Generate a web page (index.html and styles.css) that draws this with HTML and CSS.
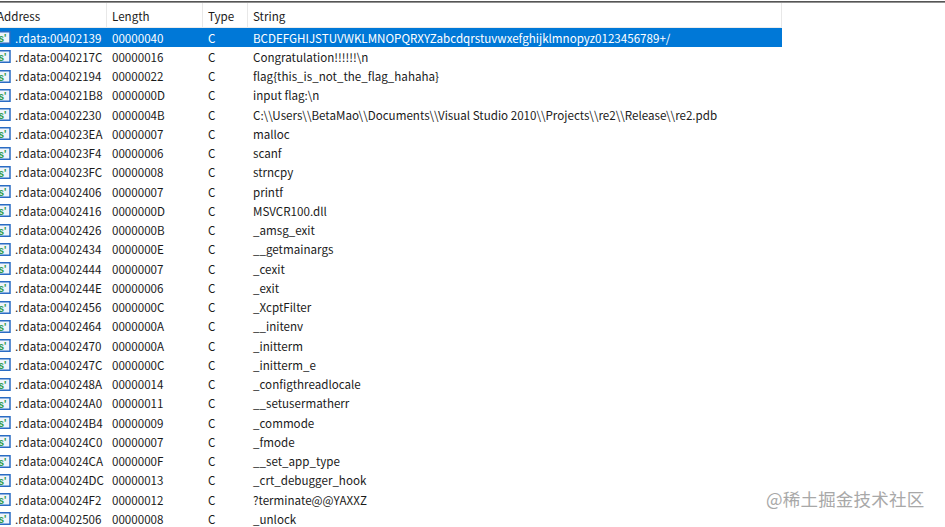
FILE: index.html
```html
<!DOCTYPE html>
<html>
<head>
<meta charset="utf-8">
<link rel="stylesheet" href="styles.css">
</head>
<body>
<div class="topline"></div>
<div class="table">
  <div class="row head">
    <div class="c addr">Address</div>
    <div class="c len">Length</div>
    <div class="c type">Type</div>
    <div class="c str">String</div>
  </div>
  <div id="rows"></div>
</div>
<div class="watermark">@稀土掘金技术社区</div>
<script src="app.js"></script>
</body>
</html>
```
FILE: styles.css
```css
html, body { margin: 0; padding: 0; background: #fff; }
body {
  width: 945px; height: 527px; overflow: hidden; position: relative;
  font-family: "Noto Sans CJK SC", "Noto Sans", sans-serif;
  font-size: 11.6px; color: #1a1a1a;
}
.topline { height: 3px; background: linear-gradient(#fff 0, #fff 1px, #444 1px, #666 2px, #bbb 3px); }
.table { width: 782px; }
.row { display: flex; height: 19.25px; align-items: center; white-space: nowrap; }
.row.head { height: 24px; border-bottom: 1px solid #ececec; }
.row.head .c { height: 24px; display: flex; align-items: center; padding-top: 2px; border-right: 1px solid #e8e8e8; box-sizing: border-box; }
.c { overflow: hidden; box-sizing: border-box; }
.addr { width: 107px; display: flex; align-items: center; }
.head .addr { margin-left: -3px; width: 110px; }
.len { width: 96px; padding-left: 5px; }
.type { width: 45px; padding-left: 5px; }
.str { flex: 1; padding-left: 5px; }
.row.sel { background: #0078d7; color: #fff; }
.icon { width: 11px; height: 13px; margin-right: 4px; flex: none; display: block; }
.watermark {
  position: absolute; left: 766px; top: 486px;
  font-size: 17.5px; color: #a8a8a8; letter-spacing: 0.2px;
}
```
FILE: app.js
```js
const data = [
["00402139","00000040","BCDEFGHIJSTUVWKLMNOPQRXYZabcdqrstuvwxefghijklmnopyz0123456789+/"],
["0040217C","00000016","Congratulation!!!!!!\\n"],
["00402194","00000022","flag{this_is_not_the_flag_hahaha}"],
["004021B8","0000000D","input flag:\\n"],
["00402230","0000004B","C:\\\\Users\\\\BetaMao\\\\Documents\\\\Visual Studio 2010\\\\Projects\\\\re2\\\\Release\\\\re2.pdb"],
["004023EA","00000007","malloc"],
["004023F4","00000006","scanf"],
["004023FC","00000008","strncpy"],
["00402406","00000007","printf"],
["00402416","0000000D","MSVCR100.dll"],
["00402426","0000000B","_amsg_exit"],
["00402434","0000000E","__getmainargs"],
["00402444","00000007","_cexit"],
["0040244E","00000006","_exit"],
["00402456","0000000C","_XcptFilter"],
["00402464","0000000A","__initenv"],
["00402470","0000000A","_initterm"],
["0040247C","0000000C","_initterm_e"],
["0040248A","00000014","_configthreadlocale"],
["004024A0","00000011","__setusermatherr"],
["004024B4","00000009","_commode"],
["004024C0","00000007","_fmode"],
["004024CA","0000000F","__set_app_type"],
["004024DC","00000013","_crt_debugger_hook"],
["004024F2","00000012","?terminate@@YAXXZ"],
["00402506","00000008","_unlock"]
];
const icon = '<svg class="icon" viewBox="0 0 11 13"><rect x="-3" y="0.75" width="13" height="11.5" fill="#eef4fb" stroke="#2a6cc4" stroke-width="1.5"/><text x="-1.5" y="10.5" font-size="10" font-family="Liberation Sans, sans-serif" font-weight="bold" fill="#2f9a4a">s\'</text></svg>';
const rows = document.getElementById('rows');
rows.innerHTML = data.map((d,i)=>
  `<div class="row${i===0?' sel':''}"><div class="c addr">${icon}.rdata:${d[0]}</div><div class="c len">${d[1]}</div><div class="c type">C</div><div class="c str">${d[2]}</div></div>`
).join('');
```
